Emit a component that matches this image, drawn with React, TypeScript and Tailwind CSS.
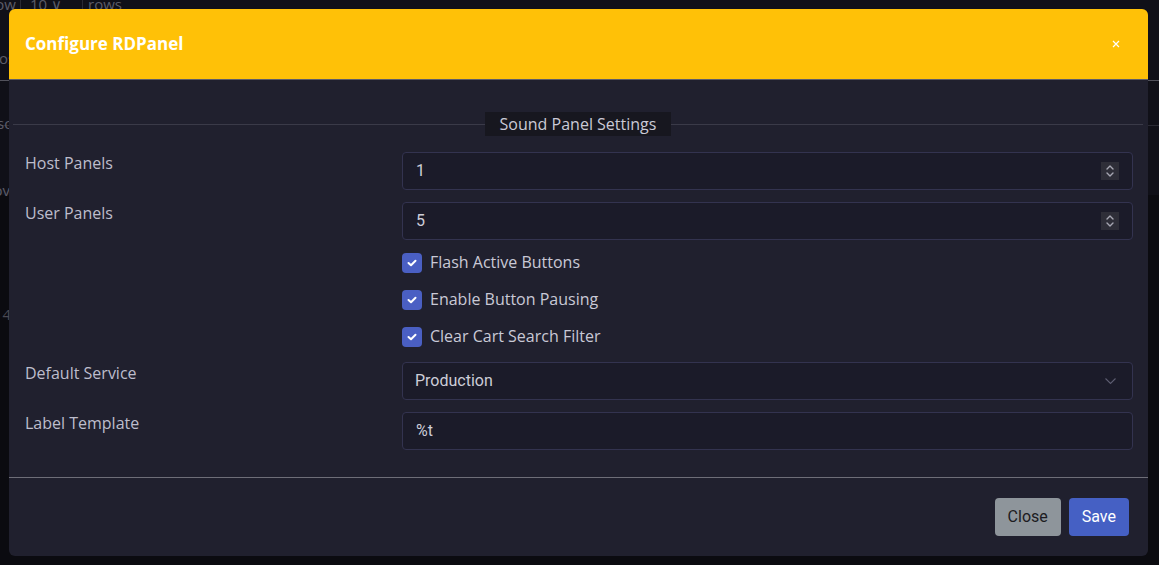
import React from "react";

const labelFont = { fontFamily: "'Open Sans', 'Noto Sans', sans-serif" };
const inputFont = { fontFamily: "Roboto, sans-serif" };

function Spinner() {
  return (
    <div className="absolute right-[13px] top-1/2 -translate-y-1/2 w-[18px] h-[18px] bg-[#2e2e38] flex items-center justify-center">
      <svg width="10" height="14" viewBox="0 0 10 14" fill="none" stroke="#a6a6b2" strokeWidth="1.4" strokeLinecap="round" strokeLinejoin="round">
        <path d="M2 5 L5 2 L8 5" />
        <path d="M2 9 L5 12 L8 9" />
      </svg>
    </div>
  );
}

function CheckRow({ label }: { label: string }) {
  return (
    <div className="flex items-center h-[37px]">
      <div className="w-[20px] h-[20px] rounded-[4px] bg-[#4a5fc3] flex items-center justify-center">
        <svg width="10" height="8" viewBox="0 0 10 8" fill="none" stroke="#ffffff" strokeWidth="2" strokeLinecap="round" strokeLinejoin="round">
          <path d="M1.5 4 L4 6.3 L8.5 1.7" />
        </svg>
      </div>
      <span className="ml-[8px] text-[16px] leading-[22px] text-[#c9c9d6] -mt-[1px]" style={labelFont}>{label}</span>
    </div>
  );
}

export default function App() {
  return (
    <div className="relative w-[1159px] h-[565px] overflow-hidden bg-[#0b0b10]" style={inputFont}>
      {/* underlying page */}
      <div className="w-full text-[15px] text-[#5c5c68]" style={labelFont}>
        <div className="h-[20px] flex items-start bg-[#101018]">
          <span className="w-[21px] shrink-0 border-r border-[#2a2a34] h-[20px] flex justify-end pr-[4px] leading-[20px] -mt-[6px] overflow-hidden">ow</span>
          <span className="w-[62px] shrink-0 pl-[9px] border-r border-[#2a2a34] h-[20px] leading-[20px] -mt-[6px]">10 ∨</span>
          <span className="pl-[5px] leading-[20px] -mt-[6px]">rows</span>
        </div>
        <div className="h-[61px] bg-[#101018] flex items-start border-b border-[#52525c]">
          <span className="-ml-[10px] mt-[27px]">Pos</span>
        </div>
        <div className="h-[45px] bg-[#101018] border-b border-[#2a2a34] flex items-start">
          <span className="-ml-[14px] mt-[31px]">Hso</span>
        </div>
        <div className="h-[69px] bg-[#101018] flex items-start">
          <span className="-ml-[16px] mt-[53px]">Cov</span>
        </div>
        <div className="h-[130px] flex items-end">
          <span className="-ml-[6px] text-[#4a4a54]">14</span>
        </div>
      </div>

      {/* modal */}
      <div className="absolute left-[9px] top-[9px] w-[1139px] h-[547px] rounded-[6px] overflow-hidden bg-[#20202e] flex flex-col">
        <div className="h-[71px] shrink-0 bg-[#ffc107] border-b border-[#5e5e68] flex items-center justify-between pl-[16px] pr-[28px]">
          <span className="text-[17px] font-bold text-white" style={labelFont}>Configure RDPanel</span>
          <svg width="8" height="8" viewBox="0 0 8 8" stroke="#ffffff" strokeWidth="1.2">
            <path d="M1 1 L7 7 M7 1 L1 7" />
          </svg>
        </div>

        <div className="flex-1 flex flex-col pl-[16px] pr-[15px]">
          {/* fieldset legend */}
          <div className="relative h-[72px] -ml-[12px] -mr-[10px] shrink-0">
            <div className="absolute left-0 right-0 top-[44px] h-px bg-[#3a3a48]" />
            <div className="absolute left-0 right-0 top-[32px] flex justify-center">
              <div className="bg-[#17171f] px-[15px] h-[24px] flex items-center text-[16px] text-[#cacad6]" style={labelFont}>
                Sound Panel Settings
              </div>
            </div>
          </div>

          <div className="grid grid-cols-[377px_1fr]">
            <div className="text-[16px] leading-[22px] text-[#bdbdcc]" style={labelFont}>Host Panels</div>
            <div className="relative h-[38px] rounded-[4px] border border-[#33334f] bg-[#1b1b29] flex items-center pl-[13px] text-[16px] text-[#cdcdd8]">
              1
              <Spinner />
            </div>

            <div className="text-[16px] leading-[22px] text-[#bdbdcc] pt-[12px]" style={labelFont}>User Panels</div>
            <div className="relative mt-[12px] h-[38px] rounded-[4px] border border-[#33334f] bg-[#1b1b29] flex items-center pl-[13px] text-[16px] text-[#cdcdd8]">
              5
              <Spinner />
            </div>

            <div />
            <div className="flex flex-col pt-[4px] pb-[7px]">
              <CheckRow label="Flash Active Buttons" />
              <CheckRow label="Enable Button Pausing" />
              <CheckRow label="Clear Cart Search Filter" />
            </div>

            <div className="text-[16px] leading-[22px] text-[#bdbdcc]" style={labelFont}>Default Service</div>
            <div className="relative h-[38px] rounded-[4px] border border-[#33334f] bg-[#1b1b29] flex items-center pl-[12px] text-[16px] text-[#cdcdd8]">
              Production
              <svg className="absolute right-[16px] top-1/2 -translate-y-1/2" width="11" height="7" viewBox="0 0 11 7" fill="none" stroke="#5c5c70" strokeWidth="1.1">
                <path d="M0.5 1 L5.5 6 L10.5 1" />
              </svg>
            </div>

            <div className="text-[16px] leading-[22px] text-[#bdbdcc] pt-[12px]" style={labelFont}>Label Template</div>
            <div className="relative mt-[12px] h-[38px] rounded-[4px] border border-[#33334f] bg-[#1b1b29] flex items-center pl-[13px] text-[16px] text-[#cdcdd8]">
              %t
            </div>
          </div>
        </div>

        <div className="h-[79px] shrink-0 border-t border-[#6e6e78] flex items-center justify-end pr-[19px] gap-[8px]">
          <button className="h-[38px] px-[13px] rounded-[4px] bg-[#8e959b] text-[16px] text-[#1c1c22]" style={inputFont}>Close</button>
          <button className="h-[38px] px-[13px] rounded-[4px] bg-[#4560c4] text-[16px] text-white" style={inputFont}>Save</button>
        </div>
      </div>
    </div>
  );
}
